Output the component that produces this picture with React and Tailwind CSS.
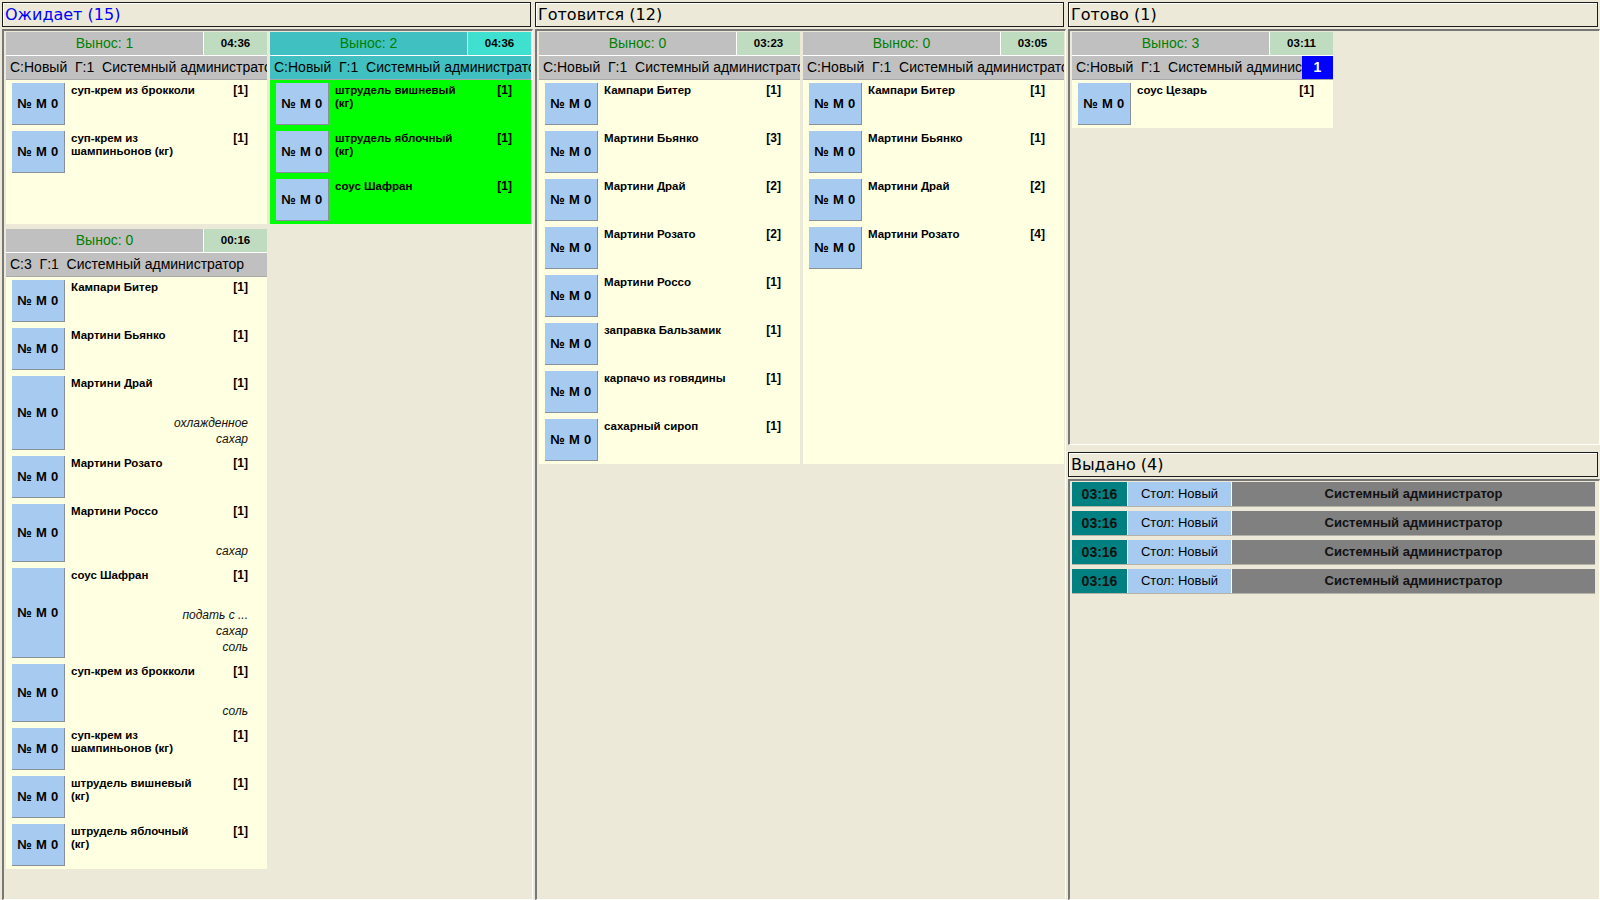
import React from 'react';

const ADMIN = 'С:Новый  Г:1  Системный администратор';

const waiting = [
    {
        vynos: 1,
        time: '04:36',
        info: ADMIN,
        items: [
            { name: 'суп-крем из брокколи', qty: 1 },
            { name: 'суп-крем из\nшампиньонов (кг)', qty: 1 },
        ],
    },
    {
        vynos: 2,
        time: '04:36',
        info: ADMIN,
        selected: true,
        items: [
            { name: 'штрудель вишневый\n(кг)', qty: 1 },
            { name: 'штрудель яблочный\n(кг)', qty: 1 },
            { name: 'соус Шафран', qty: 1 },
        ],
    },
    {
        vynos: 0,
        time: '00:16',
        info: 'С:3  Г:1  Системный администратор',
        items: [
            { name: 'Кампари Битер', qty: 1 },
            { name: 'Мартини Бьянко', qty: 1 },
            { name: 'Мартини Драй', qty: 1, notes: ['охлажденное', 'сахар'] },
            { name: 'Мартини Розато', qty: 1 },
            { name: 'Мартини Россо', qty: 1, notes: ['сахар'] },
            { name: 'соус Шафран', qty: 1, notes: ['подать с ...', 'сахар', 'соль'] },
            { name: 'суп-крем из брокколи', qty: 1, notes: ['соль'] },
            { name: 'суп-крем из\nшампиньонов (кг)', qty: 1 },
            { name: 'штрудель вишневый\n(кг)', qty: 1 },
            { name: 'штрудель яблочный\n(кг)', qty: 1 },
        ],
    },
];

const cooking = [
    {
        vynos: 0,
        time: '03:23',
        info: ADMIN,
        items: [
            { name: 'Кампари Битер', qty: 1 },
            { name: 'Мартини Бьянко', qty: 3 },
            { name: 'Мартини Драй', qty: 2 },
            { name: 'Мартини Розато', qty: 2 },
            { name: 'Мартини Россо', qty: 1 },
            { name: 'заправка Бальзамик', qty: 1 },
            { name: 'карпачо из говядины', qty: 1 },
            { name: 'сахарный сироп', qty: 1 },
        ],
    },
    {
        vynos: 0,
        time: '03:05',
        info: ADMIN,
        items: [
            { name: 'Кампари Битер', qty: 1 },
            { name: 'Мартини Бьянко', qty: 1 },
            { name: 'Мартини Драй', qty: 2 },
            { name: 'Мартини Розато', qty: 4 },
        ],
    },
];

const ready = [
    {
        vynos: 3,
        time: '03:11',
        info: ADMIN,
        badge: '1',
        items: [{ name: 'соус Цезарь', qty: 1 }],
    },
];

const issued = [1, 2, 3, 4];

const Item = ({ item }) => (
    <div className="flex pl-[6px]">
        <div className="w-[53px] shrink-0 bg-[#A6CAF0] border-r border-b border-r-[#8a9099] border-b-[#8a9099] flex items-center justify-center font-bold text-[13px] tracking-[0.3px]">
            № M 0
        </div>
        <div className="flex-1 flex flex-col pl-[6px] pr-[19px] pb-[3px]">
            <div className="h-[39px] pt-[1px] flex items-start">
                <div className="whitespace-pre-line font-bold text-[11.5px] leading-[13px]">{item.name}</div>
                <div className="ml-auto font-bold text-[12px] leading-[13px]">[{item.qty}]</div>
            </div>
            {(item.notes || []).map((n) => (
                <div key={n} className="text-right italic text-[12px] leading-[16px] text-[#111]">
                    {n}
                </div>
            ))}
        </div>
    </div>
);

const Card = ({ card }) => (
    <div className="w-[261px] flex flex-col">
        <div className="h-[24px] flex border-b border-white">
            <div
                className={`flex-1 flex items-center justify-center text-[14px] text-[#008000] ${
                    card.selected ? 'bg-[#40C0C0]' : 'bg-[#C0C0C0]'
                }`}
            >
                Вынос: {card.vynos}
            </div>
            <div
                className={`w-[64px] border-l border-white flex items-center justify-center font-bold text-[11.5px] ${
                    card.selected ? 'bg-[#40E0D0]' : 'bg-[#C0DCC0]'
                }`}
            >
                {card.time}
            </div>
        </div>
        <div
            className={`h-[24px] flex border-b border-[#a8a8a8] ${
                card.selected ? 'bg-[#40C0C0]' : 'bg-[#C0C0C0]'
            }`}
        >
            <div className="flex-1 overflow-hidden whitespace-pre pl-[4px] text-[14px] leading-[23px]">{card.info}</div>
            {card.badge && (
                <div className="w-[31px] bg-[#0000FF] text-white font-bold text-[14px] flex items-center justify-center">
                    {card.badge}
                </div>
            )}
        </div>
        <div className={`flex-1 flex flex-col gap-[6px] py-[3px] ${card.selected ? 'bg-[#00FF00]' : 'bg-[#FFFFE1]'}`}>
            {card.items.map((it, i) => (
                <Item key={i} item={it} />
            ))}
        </div>
    </div>
);

const Header = ({ children, blue }) => (
    <div
        className={`h-[25px] mx-[2px] mt-[2px] border border-[#1c1c1c] shadow-[inset_1px_1px_0_#fff] flex items-center pl-[2px] font-['DejaVu_Sans',sans-serif] text-[16px] ${
            blue ? 'text-[#0000FF]' : 'text-black'
        }`}
    >
        {children}
    </div>
);

const panel =
    'ml-[2px] border-l-2 border-t-2 border-r border-b border-l-[#777] border-t-[#777] border-r-white border-b-white';

const CardsColumn = ({ title, blue, cards }) => (
    <div className="w-[533px] shrink-0 flex flex-col h-full">
        <Header blue={blue}>{title}</Header>
        <div className={`flex-1 min-h-0 mt-[2px] pl-[2px] pt-[1px] overflow-hidden ${panel}`}>
            <div className="flex flex-wrap content-start gap-x-[3px] gap-y-[5px]">
                {cards.map((c, i) => (
                    <Card key={i} card={c} />
                ))}
            </div>
        </div>
    </div>
);

export default function App() {
    return (
        <div className="w-[1600px] h-[900px] overflow-hidden bg-[#ECE9D8] flex font-['Liberation_Sans',Arial,sans-serif] text-black">
            <CardsColumn title="Ожидает (15)" blue cards={waiting} />
            <CardsColumn title="Готовится (12)" cards={cooking} />

            <div className="flex-1 flex flex-col h-full">
                <Header>Готово (1)</Header>
                <div className={`h-[416px] mt-[2px] pl-[2px] pt-[1px] overflow-hidden ${panel}`}>
                    <div className="flex flex-wrap content-start gap-x-[3px] gap-y-[5px]">
                        {ready.map((c, i) => (
                            <Card key={i} card={c} />
                        ))}
                    </div>
                </div>

                <div className="mt-[5px]">
                    <Header>Выдано (4)</Header>
                </div>
                <div className={`flex-1 mt-[2px] pl-[2px] pr-[4px] pt-[1px] flex flex-col gap-[4px] ${panel}`}>
                    {issued.map((n) => (
                        <div key={n} className="h-[25px] flex border-b border-[#b4b2a6]">
                            <div className="w-[55px] bg-[#008080] flex items-center justify-center font-bold text-[14px] text-[#111]">
                                03:16
                            </div>
                            <div className="w-[104px] border-l border-white bg-[#A6CAF0] flex items-center justify-center text-[13px]">
                                Стол: Новый
                            </div>
                            <div className="flex-1 border-l border-white bg-[#808080] flex items-center justify-center font-bold text-[13px] text-[#111]">
                                Системный администратор
                            </div>
                        </div>
                    ))}
                </div>
            </div>
        </div>
    );
}
